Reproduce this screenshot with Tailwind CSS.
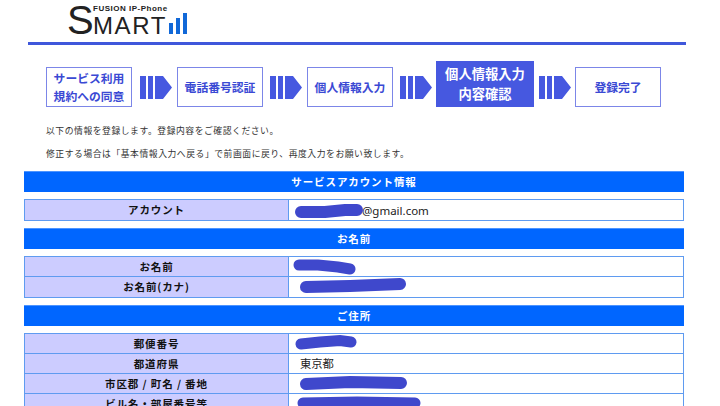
<!DOCTYPE html>
<html lang="ja">
<head>
    <meta charset="UTF-8">
    <title>サービス登録 内容確認</title>
    <script src="https://cdn.jsdelivr.net/npm/@tailwindcss/browser@4"></script>
</head>
<body class="bg-white h-[406px] overflow-hidden font-['Noto_Sans_CJK_JP','Noto_Sans',sans-serif] text-[#222]">
    <!-- Header -->
    <header class="mx-[28px] w-[658px] h-[45px] border-b-[3px] border-[#3f57db] pl-[40px] flex">
        <div class="flex h-[42px] text-[#222] font-['Liberation_Sans',sans-serif]">
            <span class="text-[40px] leading-[42px] w-[25px] mt-[-1px] ml-[-1px] mr-[1px]">S</span>
            <div class="flex flex-col">
                <span class="text-[8px] leading-[8px] mt-[5px] font-bold tracking-[0.5px] whitespace-nowrap">FUSION IP-Phone</span>
                <div class="flex items-end mt-[1px]">
                    <span class="text-[24px] leading-[24px] h-[22px] tracking-[1.6px] w-[75px]">MART</span>
                    <div class="flex items-end gap-[3px] h-[22px] ml-[1px] pb-[2px]">
                        <i class="block w-[4px] h-[11px] bg-[#1168d8]"></i>
                        <i class="block w-[4px] h-[16px] bg-[#1168d8]"></i>
                        <i class="block w-[4px] h-[21px] bg-[#1168d8]"></i>
                    </div>
                </div>
            </div>
        </div>
    </header>

    <!-- Steps -->
    <div class="ml-[46px] mt-[16px] flex items-end h-[46px] text-[11.8px] leading-[18px] font-bold text-[#3a49d4]">
        <div class="w-[86px] h-[40px] border border-[#7c86e8] flex items-center justify-center text-center">サービス利用<br>規約への同意</div>
        <svg class="ml-[8px] mr-[5px] mb-[8px]" width="32" height="23" viewBox="0 0 32 23"><path fill="#4658e0" d="M0 0h6v23H0zM8 0h5v23H8zM15 0h8l9 11.500-9 11.500h-8z"/></svg>
        <div class="w-[86px] h-[40px] border border-[#7c86e8] flex items-center justify-center text-center">電話番号認証</div>
        <svg class="ml-[7px] mr-[5px] mb-[8px]" width="32" height="23" viewBox="0 0 32 23"><path fill="#4658e0" d="M0 0h6v23H0zM8 0h5v23H8zM15 0h8l9 11.500-9 11.500h-8z"/></svg>
        <div class="w-[86px] h-[40px] border border-[#7c86e8] flex items-center justify-center text-center">個人情報入力</div>
        <svg class="ml-[7px] mr-[4px] mb-[8px]" width="32" height="23" viewBox="0 0 32 23"><path fill="#4658e0" d="M0 0h6v23H0zM8 0h5v23H8zM15 0h8l9 11.500-9 11.500h-8z"/></svg>
        <div class="w-[98px] h-[46px] bg-[#4658e0] text-white text-[13.3px] leading-[20px] flex items-center justify-center text-center">個人情報入力<br>内容確認</div>
        <svg class="ml-[5px] mr-[4px] mb-[8px]" width="32" height="23" viewBox="0 0 32 23"><path fill="#4658e0" d="M0 0h6v23H0zM8 0h5v23H8zM15 0h8l9 11.500-9 11.500h-8z"/></svg>
        <div class="w-[86px] h-[40px] border border-[#7c86e8] flex items-center justify-center text-center">登録完了</div>
    </div>

    <!-- Intro -->
    <div class="ml-[46px] mt-[16px] text-[8.8px] leading-[16px] tracking-[0.55px] text-[#333]">
        <p>以下の情報を登録します。登録内容をご確認ください。</p>
        <p class="mt-[7px]">修正する場合は「基本情報入力へ戻る」で前画面に戻り、再度入力をお願い致します。</p>
    </div>

    <!-- Form sections -->
    <main class="mx-[24px] w-[660px] mt-[9px] flex flex-col gap-[7px] text-[10.5px] tracking-[0.9px]">
        <h2 class="h-[21px] bg-[#0066ff] border-t border-[#4d94ff] text-white font-bold text-center leading-[19px]">サービスアカウント情報</h2>
        <div class="border border-[#5f9bf0]">
            <div class="flex h-[20px]">
                <div class="w-[264px] bg-[#ccccff] border-r border-[#5f9bf0] font-bold text-[#111] text-center leading-[20px]">アカウント</div>
                <div class="relative flex-1 pl-[12px] text-[11.5px] leading-[21px] tracking-normal font-['Noto_Sans',sans-serif]">
                    <span class="pl-[61px]">@gmail.com</span>
                    <svg class="absolute left-[6px] top-[3px]" width="68" height="16" viewBox="0 0 68 16"><path d="M6 9 L30 9 L50 7 L62 7" stroke="#3f48cc" stroke-width="12" stroke-linecap="round" fill="none"/></svg>
                </div>
            </div>
        </div>
        <h2 class="h-[21px] bg-[#0066ff] border-t border-[#4d94ff] text-white font-bold text-center leading-[19px]">お名前</h2>
        <div class="border border-[#5f9bf0] divide-y divide-[#5f9bf0]">
            <div class="flex h-[20px]">
                <div class="w-[264px] bg-[#ccccff] border-r border-[#5f9bf0] font-bold text-[#111] text-center leading-[20px]">お名前</div>
                <div class="relative flex-1">
                    <svg class="absolute left-[4px] top-[1px]" width="63" height="18" viewBox="0 0 63 18"><path d="M6 7 L25 7 L45 9 L57 11" stroke="#3f48cc" stroke-width="11" stroke-linecap="round" fill="none"/></svg>
                </div>
            </div>
            <div class="flex h-[20px]">
                <div class="w-[264px] bg-[#ccccff] border-r border-[#5f9bf0] font-bold text-[#111] text-center leading-[19px]">お名前(カナ)</div>
                <div class="relative flex-1">
                    <svg class="absolute left-[11px] top-[0px]" width="106" height="18" viewBox="0 0 106 18"><path d="M6 10 L50 9 L100 7" stroke="#3f48cc" stroke-width="12" stroke-linecap="round" fill="none"/></svg>
                </div>
            </div>
        </div>
        <h2 class="h-[21px] bg-[#0066ff] border-t border-[#4d94ff] text-white font-bold text-center leading-[19px]">ご住所</h2>
        <div class="border border-[#5f9bf0] divide-y divide-[#5f9bf0]">
            <div class="flex h-[20px]">
                <div class="w-[264px] bg-[#ccccff] border-r border-[#5f9bf0] font-bold text-[#111] text-center leading-[20px]">郵便番号</div>
                <div class="relative flex-1">
                    <svg class="absolute left-[6px] top-[0px]" width="62" height="17" viewBox="0 0 62 17"><path d="M6 10 L25 8 L45 6.500 L56 8" stroke="#3f48cc" stroke-width="11" stroke-linecap="round" fill="none"/></svg>
                </div>
            </div>
            <div class="flex h-[20px]">
                <div class="w-[264px] bg-[#ccccff] border-r border-[#5f9bf0] font-bold text-[#111] text-center leading-[19px]">都道府県</div>
                <div class="flex-1 pl-[11px] leading-[19px] text-[11.3px] tracking-normal">東京都</div>
            </div>
            <div class="flex h-[20px]">
                <div class="w-[264px] bg-[#ccccff] border-r border-[#5f9bf0] font-bold text-[#111] text-center leading-[19px]">市区郡 / 町名 / 番地</div>
                <div class="relative flex-1">
                    <svg class="absolute left-[11px] top-[1px]" width="107" height="16" viewBox="0 0 107 16"><path d="M6 9 L50 7 L101 8" stroke="#3f48cc" stroke-width="12" stroke-linecap="round" fill="none"/></svg>
                </div>
            </div>
            <div class="flex h-[20px]">
                <div class="w-[264px] bg-[#ccccff] border-r border-[#5f9bf0] font-bold text-[#111] text-center leading-[19px]">ビル名・部屋番号等</div>
                <div class="relative flex-1">
                    <svg class="absolute left-[8px] top-[1px]" width="124" height="16" viewBox="0 0 124 16"><path d="M6 8 L60 7 L118 8" stroke="#3f48cc" stroke-width="11" stroke-linecap="round" fill="none"/></svg>
                </div>
            </div>
        </div>
    </main>
</body>
</html>
